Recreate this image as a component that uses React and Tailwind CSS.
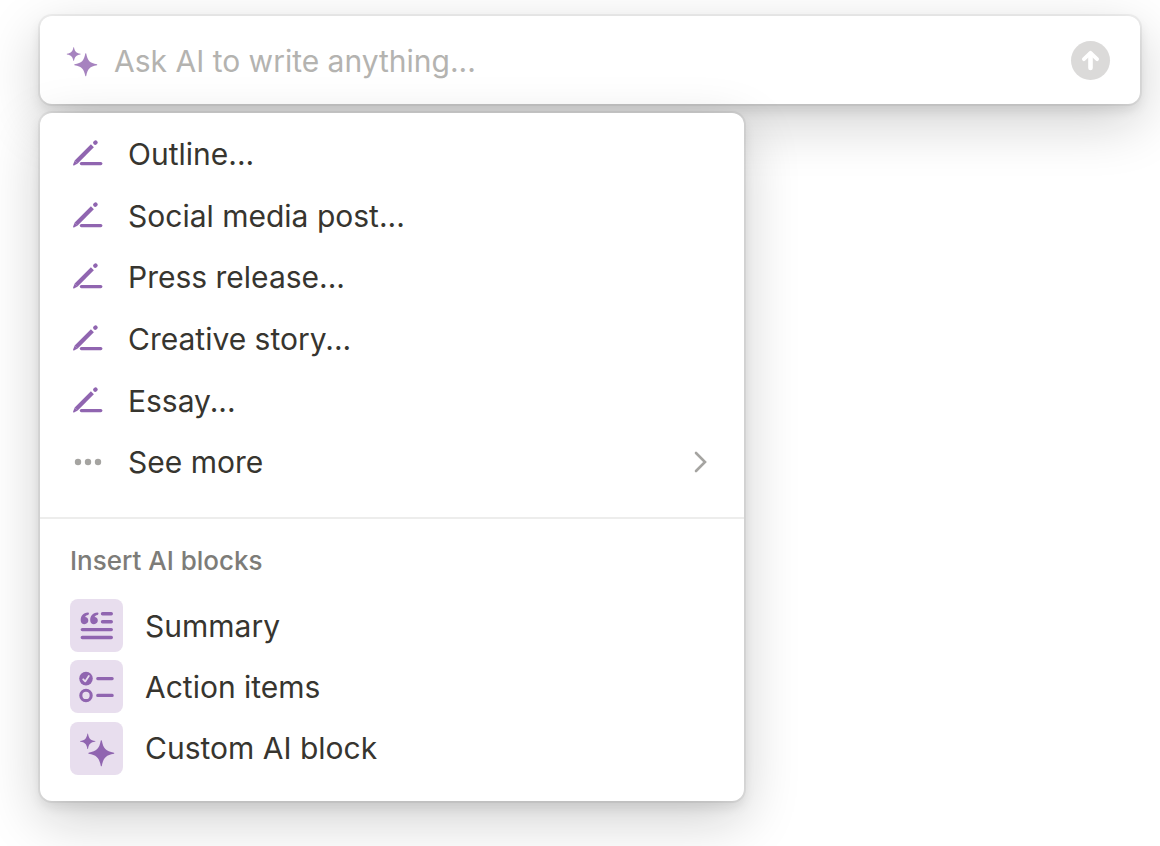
import React, { useState } from 'react';

const prompts = ['Outline...', 'Social media post...', 'Press release...', 'Creative story...', 'Essay...'];

function PenIcon() {
    return (
        <svg className="w-8 h-8 shrink-0" viewBox="0 0 32 32" fill="none" stroke="#9065b0" strokeLinecap="round">
            <path d="M4.2 24 L20.4 7.8" strokeWidth="4.2" strokeLinecap="butt" />
            <path d="M2.7 22.5 L5.8 25.6 L2 27.4 Q0.8 27.7 1.1 26.5 Z" fill="#9065b0" stroke="none" />
            <path d="M23.2 4.8 L23.6 4.4" strokeWidth="4.2" />
            <path d="M9.4 25.6 H28.8" strokeWidth="3.2" />
        </svg>
    );
}

function Sparkles({ className }) {
    const star =
        'M-0.5 -12.7 Q0 -13.2 0.5 -12.7 C2.1 -4.4 4.4 -2.1 12.7 -0.5 Q13.2 0 12.7 0.5 C4.4 2.1 2.1 4.4 0.5 12.7 Q0 13.2 -0.5 12.7 C-2.1 4.4 -4.4 2.1 -12.7 0.5 Q-13.2 0 -12.7 -0.5 C-4.4 -2.1 -2.1 -4.4 -0.5 -12.7 Z';
    return (
        <svg className={className} viewBox="0 0 53 53" fill="#9065b0">
            <path d={star} transform="translate(17.7 19.3) scale(0.6)" />
            <path d={star} transform="translate(31.3 31.3)" />
        </svg>
    );
}

function SummaryIcon() {
    return (
        <svg className="w-full h-full" viewBox="0 0 53 53" fill="#9065b0">
            <path d="M18 13.6 C13 14 10.7 17.2 10.7 21.2 C10.7 23.6 12.3 25.2 14.5 25.2 C16.7 25.2 18.3 23.7 18.3 21.6 C18.3 19.6 16.9 18.2 15 18.1 C15.4 17 16.5 16.2 18.1 15.9 C19.3 15.6 19.3 13.6 18 13.6 Z" />
            <path d="M27.5 13.6 C22.5 14 20.2 17.2 20.2 21.2 C20.2 23.6 21.8 25.2 24 25.2 C26.2 25.2 27.8 23.7 27.8 21.6 C27.8 19.6 26.4 18.2 24.5 18.1 C24.9 17 26 16.2 27.6 15.9 C28.8 15.6 28.8 13.6 27.5 13.6 Z" />
            <path d="M32.5 14.8 H41.3 M32.5 22.8 H41.3 M12.3 30.6 H41.3 M12.3 38.5 H41.3" stroke="#9065b0" strokeWidth="3.4" strokeLinecap="round" />
        </svg>
    );
}

function ActionIcon() {
    return (
        <svg className="w-full h-full" viewBox="0 0 53 53" fill="none" strokeLinecap="round" strokeLinejoin="round">
            <circle cx="16" cy="18.6" r="6.8" fill="#9065b0" />
            <path d="M13.2 19.3 L15.2 21.4 L18.8 15.9" stroke="#e8deee" strokeWidth="1.8" />
            <circle cx="16" cy="35.4" r="5.2" stroke="#9065b0" strokeWidth="3.1" />
            <path d="M27.7 18.6 H42.2 M27.7 35.4 H42.2" stroke="#9065b0" strokeWidth="3.1" />
        </svg>
    );
}

const blocks = [
    { label: 'Summary', icon: <SummaryIcon /> },
    { label: 'Action items', icon: <ActionIcon /> },
    { label: 'Custom AI block', icon: <Sparkles className="w-full h-full" /> },
];

export default function App() {
    const [prompt, setPrompt] = useState('');

    return (
        <div className="min-h-screen bg-white pt-4 pl-10 pr-5 pb-11 font-[Inter,sans-serif] text-[30px] leading-10 text-[#37352f]">
            {/* Prompt bar */}
            <form
                onSubmit={(e) => e.preventDefault()}
                className="flex h-[88px] items-center rounded-xl bg-white pl-[18px] pr-[30px] shadow-[0_0_0_2px_rgba(15,15,15,0.05),0_6px_12px_rgba(15,15,15,0.1),0_18px_56px_rgba(15,15,15,0.2)]"
            >
                <Sparkles className="w-[47px] h-[47px] shrink-0 opacity-80" />
                <input
                    type="text"
                    aria-label="Ask AI"
                    className="ml-[9px] min-w-0 flex-1 bg-transparent pt-0.5 outline-none placeholder:text-[#b4b3b0]"
                    placeholder="Ask AI to write anything..."
                    value={prompt}
                    onChange={(e) => setPrompt(e.target.value)}
                />
                <button type="submit" aria-label="Send" className="h-[39px] w-[39px] shrink-0 rounded-full bg-[#dbdad9]">
                    <svg className="h-full w-full" viewBox="0 0 39 39" fill="none" stroke="#fff" strokeLinecap="round" strokeLinejoin="round">
                        <path d="M19.5 13 V27" strokeWidth="4.6" />
                        <path d="M12.9 18.2 L19.5 11.8 L26.1 18.2" strokeWidth="3.8" />
                    </svg>
                </button>
            </form>

            {/* Suggestions menu */}
            <div className="relative mt-[9px] max-w-[704px] rounded-xl bg-white pt-[10px] pb-[22px] shadow-[0_0_0_2px_rgba(15,15,15,0.05),0_6px_12px_rgba(15,15,15,0.1),0_18px_56px_rgba(15,15,15,0.2)]">
                <div className="flex h-[370px] flex-col">
                    {prompts.map((label) => (
                        <button key={label} type="button" className="flex flex-1 items-center gap-6 pl-8 text-left">
                            <PenIcon />
                            {label}
                        </button>
                    ))}
                    <button type="button" className="flex flex-1 items-center gap-6 pl-8 pr-9 text-left">
                        <svg className="w-8 h-8 shrink-0" viewBox="0 0 32 32" fill="#a5a4a1">
                            <circle cx="6" cy="16" r="3.2" />
                            <circle cx="16" cy="16" r="3.2" />
                            <circle cx="26" cy="16" r="3.2" />
                        </svg>
                        <span className="flex-1">See more</span>
                        <svg className="w-4 h-6" viewBox="0 0 16 24" fill="none" stroke="#a5a4a1" strokeWidth="2.6" strokeLinecap="round">
                            <path d="M4 3 L13 12 L4 21" />
                        </svg>
                    </button>
                </div>

                <h2 className="mt-6 border-t-2 border-[#ededec] px-[30px] pt-7 pb-5 text-[26px] leading-7 font-medium text-[#7d7c78]">
                    Insert AI blocks
                </h2>
                <div className="flex h-[184px] flex-col">
                    {blocks.map((block) => (
                        <button key={block.label} type="button" className="flex flex-1 items-center gap-[22px] pl-[30px] text-left">
                            <span className="h-[53px] w-[53px] shrink-0 rounded-lg bg-[#e8deee]">{block.icon}</span>
                            {block.label}
                        </button>
                    ))}
                </div>
            </div>
        </div>
    );
}
